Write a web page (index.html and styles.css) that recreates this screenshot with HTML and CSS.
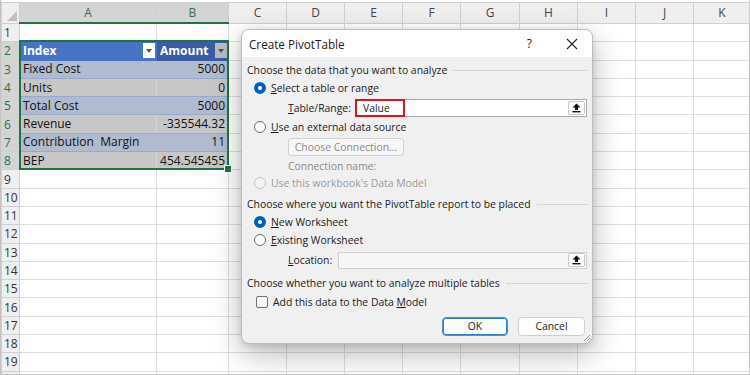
FILE: index.html
```html
<!DOCTYPE html>
<html lang="en">
<head>
    <meta charset="UTF-8">
    <meta name="viewport" content="width=device-width, initial-scale=1.0">
    <title>Create PivotTable</title>
    <link rel="stylesheet" href="styles.css">
</head>
<body>
<div class="frame">
    <table class="sheet">
        <colgroup>
            <col style="width:18px"><col style="width:137px"><col style="width:72px">
            <col style="width:58px"><col style="width:58px"><col style="width:58px"><col style="width:58px">
            <col style="width:59px"><col style="width:58px"><col style="width:58px"><col style="width:58px"><col>
        </colgroup>
        <thead>
            <tr>
                <th class="corner"><span class="corner-tri"></span></th>
                <th class="col-sel">A</th><th class="col-sel">B</th>
                <th>C</th><th>D</th><th>E</th><th>F</th><th>G</th><th>H</th><th>I</th><th>J</th><th>K</th>
            </tr>
        </thead>
        <tbody>
            <tr><th>1</th><td></td><td></td><td></td><td></td><td></td><td></td><td></td><td></td><td></td><td></td><td></td></tr>
            <tr>
                <th class="row-sel">2</th>
                <td class="hdr-a"><div class="hdr-cell">Index<span class="filter"><span class="tri"></span></span></div></td>
                <td class="hdr-b"><div class="hdr-cell">Amount<span class="filter dark"><span class="tri"></span></span></div></td>
                <td></td><td></td><td></td><td></td><td></td><td></td><td></td><td></td><td></td>
            </tr>
            <tr class="band-blue"><th class="row-sel">3</th><td>Fixed Cost</td><td class="num">5000</td><td></td><td></td><td></td><td></td><td></td><td></td><td></td><td></td><td></td></tr>
            <tr class="band-gray"><th class="row-sel">4</th><td>Units</td><td class="num">0</td><td></td><td></td><td></td><td></td><td></td><td></td><td></td><td></td><td></td></tr>
            <tr class="band-blue"><th class="row-sel">5</th><td>Total Cost</td><td class="num">5000</td><td></td><td></td><td></td><td></td><td></td><td></td><td></td><td></td><td></td></tr>
            <tr class="band-gray"><th class="row-sel">6</th><td>Revenue</td><td class="num">-335544.32</td><td></td><td></td><td></td><td></td><td></td><td></td><td></td><td></td><td></td></tr>
            <tr class="band-blue"><th class="row-sel">7</th><td class="pre">Contribution  Margin</td><td class="num">11</td><td></td><td></td><td></td><td></td><td></td><td></td><td></td><td></td><td></td></tr>
            <tr class="band-gray last"><th class="row-sel">8</th><td>BEP</td><td class="num">454.545455</td><td></td><td></td><td></td><td></td><td></td><td></td><td></td><td></td><td></td></tr>
            <tr><th>9</th><td></td><td></td><td></td><td></td><td></td><td></td><td></td><td></td><td></td><td></td><td></td></tr>
            <tr><th>10</th><td></td><td></td><td></td><td></td><td></td><td></td><td></td><td></td><td></td><td></td><td></td></tr>
            <tr><th>11</th><td></td><td></td><td></td><td></td><td></td><td></td><td></td><td></td><td></td><td></td><td></td></tr>
            <tr><th>12</th><td></td><td></td><td></td><td></td><td></td><td></td><td></td><td></td><td></td><td></td><td></td></tr>
            <tr><th>13</th><td></td><td></td><td></td><td></td><td></td><td></td><td></td><td></td><td></td><td></td><td></td></tr>
            <tr><th>14</th><td></td><td></td><td></td><td></td><td></td><td></td><td></td><td></td><td></td><td></td><td></td></tr>
            <tr><th>15</th><td></td><td></td><td></td><td></td><td></td><td></td><td></td><td></td><td></td><td></td><td></td></tr>
            <tr><th>16</th><td></td><td></td><td></td><td></td><td></td><td></td><td></td><td></td><td></td><td></td><td></td></tr>
            <tr><th>17</th><td></td><td></td><td></td><td></td><td></td><td></td><td></td><td></td><td></td><td></td><td></td></tr>
            <tr><th>18</th><td></td><td></td><td></td><td></td><td></td><td></td><td></td><td></td><td></td><td></td><td></td></tr>
            <tr><th>19</th><td></td><td></td><td></td><td></td><td></td><td></td><td></td><td></td><td></td><td></td><td></td></tr>
            <tr><th></th><td></td><td></td><td></td><td></td><td></td><td></td><td></td><td></td><td></td><td></td><td></td></tr>
        </tbody>
    </table>

    <div class="selection"><span class="handle"></span></div>

    <div class="dialog">
        <div class="titlebar">
            <span class="title">Create PivotTable</span>
            <span class="help">?</span>
            <svg class="close" width="12" height="12" viewBox="0 0 12 12"><path d="M1 1L11 11M11 1L1 11" stroke="#222" stroke-width="1.1" fill="none"/></svg>
        </div>
        <div class="dialog-body">
            <div class="group-title">Choose the data that you want to analyze</div>
            <div class="option"><span class="radio checked"></span><span><u>S</u>elect a table or range</span></div>
            <div class="field-row">
                <span class="field-label"><u>T</u>able/Range:</span>
                <div class="range-input">
                    <span class="range-value">Value</span>
                    <span class="collapse-btn">
                        <svg width="9" height="10" viewBox="0 0 9 10"><path d="M4.5 0.5L8.5 4.5H6V7H3V4.5H0.5Z" fill="#111"/><rect x="0.5" y="8" width="8" height="1.4" fill="#111"/></svg>
                    </span>
                </div>
            </div>
            <div class="option"><span class="radio"></span><span><u>U</u>se an external data source</span></div>
            <div class="conn-row"><span class="conn-btn">Choose Connection...</span></div>
            <div class="conn-name">Connection name:</div>
            <div class="option short disabled"><span class="radio"></span><span>Use this workbook's Data Model</span></div>

            <div class="group-title second">Choose where you want the PivotTable report to be placed</div>
            <div class="option"><span class="radio checked"></span><span><u>N</u>ew Worksheet</span></div>
            <div class="option"><span class="radio"></span><span><u>E</u>xisting Worksheet</span></div>
            <div class="field-row loc">
                <span class="field-label"><u>L</u>ocation:</span>
                <div class="loc-input">
                    <span class="loc-fill"></span>
                    <span class="collapse-btn">
                        <svg width="9" height="10" viewBox="0 0 9 10"><path d="M4.5 0.5L8.5 4.5H6V7H3V4.5H0.5Z" fill="#111"/><rect x="0.5" y="8" width="8" height="1.4" fill="#111"/></svg>
                    </span>
                </div>
            </div>

            <div class="group-title third">Choose whether you want to analyze multiple tables</div>
            <div class="option check-row"><span class="checkbox"></span><span>Add this data to the Data <u>M</u>odel</span></div>

            <div class="actions">
                <span class="btn primary">OK</span>
                <span class="btn">Cancel</span>
            </div>
        </div>
        <svg class="grip" width="9" height="9" viewBox="0 0 9 9"><path d="M8 2L2 8M8 5L5 8" stroke="#9a9a9a" stroke-width="1"/></svg>
    </div>
</div>
</body>
</html>
```

FILE: styles.css
```css
body {
    margin: 0;
    background-color: #fff;
    font-family: 'Open Sans', 'Noto Sans', sans-serif;
}

.frame {
    position: relative;
    width: 748px;
    height: 372px;
    border: 1px solid #c4c4c4;
    border-top: none;
    overflow: hidden;
    padding-top: 2px;
}

/* spreadsheet */

.sheet {
    border-collapse: collapse;
    table-layout: fixed;
    width: 750px;
    font-size: 12px;
    color: #111;
}

.sheet th {
    background-color: #efefef;
    color: #444;
    font-weight: normal;
    font-size: 12px;
    border: 1px solid #d0d0d0;
    padding: 0;
}

.sheet thead th {
    height: 19px;
}

.sheet tbody th {
    text-align: left;
    padding-left: 2px;
    color: #333;
}

.sheet .corner {
    position: relative;
}

.corner-tri {
    position: absolute;
    right: 2px;
    bottom: 2px;
    width: 0;
    height: 0;
    border-left: 10px solid transparent;
    border-bottom: 10px solid #c0c0c0;
}

.sheet .col-sel {
    background-color: #d4d4d4;
    color: #3f6b4f;
    border-bottom: 2px solid #217346;
}

.sheet .row-sel {
    background-color: #d4d4d4;
    color: #217346;
}

.sheet td {
    height: 17.3px;
    border: 1px solid #dedede;
    padding: 0 3px;
    white-space: nowrap;
    overflow: hidden;
    line-height: 16px;
}

.sheet td.pre {
    white-space: pre;
}

.sheet td.num {
    text-align: right;
    padding-right: 3px;
}

.hdr-a,
.hdr-b {
    color: #fff;
    font-weight: bold;
}

.sheet td.hdr-a {
    background-color: #4873c4;
    border-color: #4873c4;
    padding-right: 1px;
}

.sheet td.hdr-b {
    background-color: #3a5ca5;
    border-color: #3a5ca5;
    padding-right: 1px;
}

.hdr-cell {
    display: flex;
    align-items: center;
    justify-content: space-between;
}

.filter {
    width: 12px;
    height: 15px;
    background-color: #fff;
    display: flex;
    align-items: center;
    justify-content: center;
}

.filter.dark {
    background-color: #b9bdc6;
}

.tri {
    width: 0;
    height: 0;
    border-left: 3.5px solid transparent;
    border-right: 3.5px solid transparent;
    border-top: 4px solid #555;
}

.band-blue td:nth-child(2),
.band-blue td:nth-child(3) {
    background-color: #b1bbcf;
    border-color: #b1bbcf;
    border-bottom-color: #98a9cc;
}

.band-gray td:nth-child(2),
.band-gray td:nth-child(3) {
    background-color: #c7c7c7;
    border-color: #c7c7c7;
    border-bottom-color: #98a9cc;
    border-right-color: #d6d6d6;
}

.band-gray td:nth-child(3) {
    border-right-color: #c7c7c7;
}

.selection {
    position: absolute;
    left: 18px;
    top: 40px;
    width: 206px;
    height: 126px;
    border: 2px solid #217346;
}

.handle {
    position: absolute;
    right: -5px;
    bottom: -5px;
    width: 6px;
    height: 6px;
    background-color: #217346;
    border: 1px solid #fff;
}

/* dialog */

.dialog {
    position: absolute;
    left: 240px;
    top: 29px;
    width: 352px;
    height: 315px;
    background-color: #f0f0f0;
    border: 1px solid #bdbdbd;
    border-radius: 8px;
    box-sizing: border-box;
    box-shadow: 0 10px 30px rgba(0, 0, 0, 0.28), 0 2px 6px rgba(0, 0, 0, 0.12);
    overflow: hidden;
    font-size: 10.4px;
    color: #1a1a1a;
}

.titlebar {
    height: 27px;
    background-color: #fff;
    display: flex;
    align-items: center;
    padding-left: 7px;
}

.title {
    flex: 1;
    font-size: 11.7px;
}

.help {
    font-size: 12px;
    margin-right: 34px;
}

.close {
    margin-right: 14px;
}

.dialog-body {
    padding: 4px 5px 0 5px;
}

.group-title {
    height: 18px;
    display: flex;
    align-items: center;
    white-space: nowrap;
}

.group-title::after {
    content: "";
    flex: 1;
    border-top: 1px solid #d6d6d6;
    margin-left: 6px;
}

.group-title.second {
    margin-top: 5px;
}

.group-title.third {
    margin-top: 4px;
}

.option {
    height: 18px;
    display: flex;
    align-items: center;
    padding-left: 7px;
}

.option.short {
    height: 15px;
}

.option.check-row {
    height: 20px;
    padding-left: 9px;
}

.option.disabled {
    color: #9a9a9a;
}

.radio {
    width: 10px;
    height: 10px;
    border: 1px solid #6e6e6e;
    border-radius: 50%;
    background-color: #fafafa;
    margin-right: 5px;
    box-sizing: content-box;
}

.radio.checked {
    width: 4px;
    height: 4px;
    border: 4px solid #005fb8;
    background-color: #fff;
}

.disabled .radio {
    border-color: #c2c2c2;
    background-color: #f3f3f3;
}

.checkbox {
    width: 10px;
    height: 10px;
    border: 1px solid #707070;
    border-radius: 2px;
    background-color: #fafafa;
    margin-right: 5px;
}

.field-row {
    height: 20px;
    margin-top: 1px;
    display: flex;
    align-items: center;
    padding-left: 41px;
}

.field-label {
    width: 67px;
}

.range-input,
.loc-input {
    flex: 1;
    height: 18px;
    background-color: #fff;
    border: 1px solid #a8a8a8;
    box-sizing: border-box;
    display: flex;
    align-items: center;
    justify-content: space-between;
}

.range-value {
    width: 50px;
    height: 18px;
    margin: -1px 0 0 -1px;
    border: 2px solid #e0121b;
    box-sizing: border-box;
    padding-left: 6px;
    line-height: 14px;
}

.collapse-btn {
    width: 17px;
    height: 14px;
    margin-right: 1px;
    background-color: #fff;
    border: 1px solid #c8c8c8;
    border-radius: 2px;
    box-sizing: border-box;
    display: flex;
    align-items: center;
    justify-content: center;
}

.field-row.loc .field-label {
    width: 50px;
}

.loc-input {
    height: 17px;
    background-color: #f6f6f6;
    border-color: #cfcfcf;
}

.loc-fill {
    flex: 1;
}

.conn-row {
    height: 20px;
    margin-top: 1px;
    display: flex;
    align-items: center;
    padding-left: 41px;
}

.conn-btn {
    width: 116px;
    height: 18px;
    border: 1px solid #d2d2d2;
    border-radius: 3px;
    background-color: #f7f7f7;
    box-sizing: border-box;
    color: #8a8a8a;
    text-align: center;
    line-height: 16px;
}

.conn-name {
    height: 18px;
    line-height: 18px;
    padding-left: 41px;
    color: #8a8a8a;
}

.actions {
    margin-top: 5px;
    display: flex;
    justify-content: flex-end;
    gap: 10px;
    padding-right: 2px;
}

.btn {
    width: 67px;
    height: 19px;
    border: 1px solid #cfcfcf;
    border-radius: 4px;
    background-color: #fdfdfd;
    box-sizing: border-box;
    text-align: center;
    line-height: 17px;
}

.btn.primary {
    width: 66px;
    border: 1px solid #4a90d0;
    box-shadow: inset 0 0 0 1px #2f7fcf;
}

.grip {
    position: absolute;
    right: 1px;
    bottom: 1px;
}
```
